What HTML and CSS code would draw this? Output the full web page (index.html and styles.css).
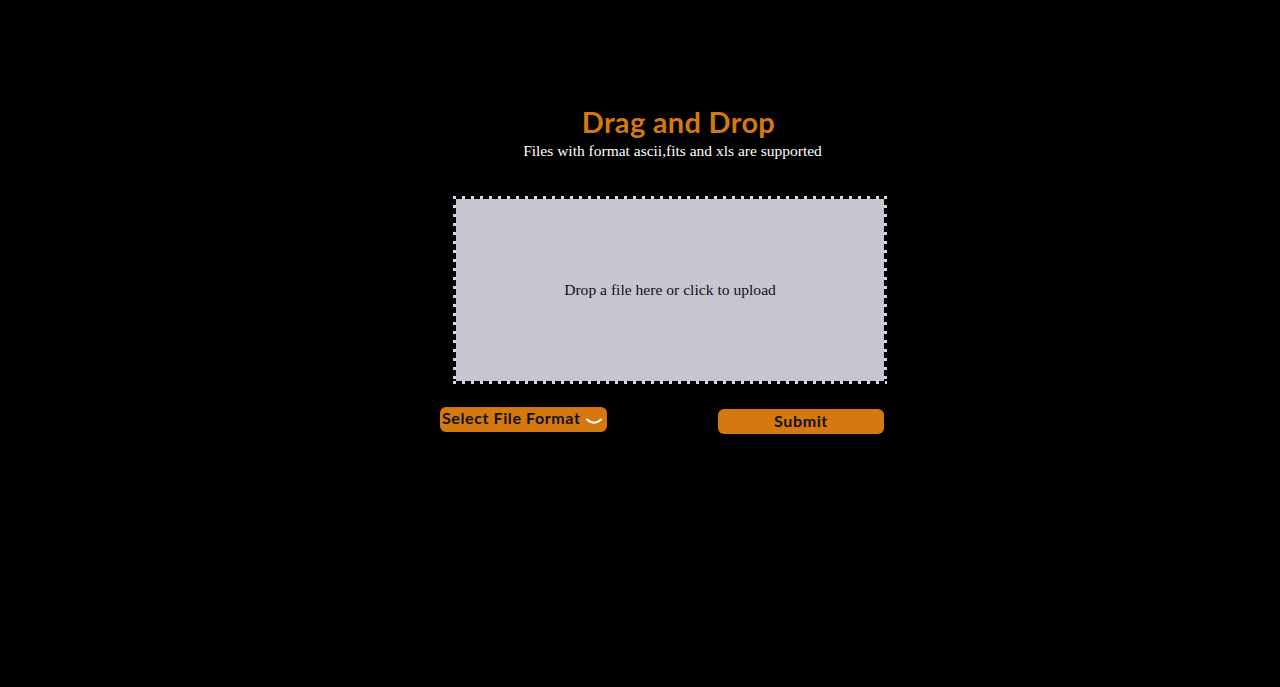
FILE: index.html
```html
<!DOCTYPE html>
<html>
<head>
<meta charset="utf-8">
<link rel="stylesheet" href="styles.css">
</head>
<body>
<main class="page">
  <header class="head">
    <h1 class="title">Drag and Drop</h1>
    <p class="subtitle">Files with format ascii,fits and xls are supported</p>
  </header>
  <div class="dropzone">
    <span class="drop-text">Drop a file here or click to upload</span>
  </div>
  <div class="actions">
    <div class="select">
      <span>Select File Format</span>
      <svg class="chev" width="16" height="8" viewBox="0 0 16 8"><path d="M1 1.5 Q8 8 15 1.5" fill="none" stroke="#fff" stroke-width="2" stroke-linecap="round"/></svg>
    </div>
    <button class="submit">Submit</button>
  </div>
</main>
</body>
</html>
```

FILE: styles.css
```css
html, body {
  margin: 0;
  padding: 0;
  background: #000;
  height: 100%;
}
.page {
  width: 448px;
  margin: 0 auto;
  padding-top: 104px;
  display: flex;
  flex-direction: column;
  position: relative;
  left: 24px;
}
.head {
  text-align: center;
}
.title {
  margin: 0 0 0 29px;
  font-family: "Lato", "Noto Sans", sans-serif;
  font-weight: 700;
  font-size: 29px;
  line-height: 36px;
  color: #d4780f;
  letter-spacing: 0.3px;
}
.subtitle {
  margin: 1px 0 0 17px;
  font-family: "Liberation Serif", serif;
  font-size: 15.5px;
  line-height: 20px;
  color: #fff;
}
.dropzone {
  margin-top: 35px;
  margin-left: 13px;
  width: 434px;
  height: 188px;
  box-sizing: border-box;
  padding: 3px;
  background:
    repeating-linear-gradient(to right, #d6d6dc 0 3px, transparent 3px 9px) left top / 100% 3px no-repeat,
    repeating-linear-gradient(to right, #d6d6dc 0 3px, transparent 3px 9px) left bottom / 100% 3px no-repeat,
    repeating-linear-gradient(to bottom, #d6d6dc 0 3px, transparent 3px 9px) left top / 3px 100% no-repeat,
    repeating-linear-gradient(to bottom, #d6d6dc 0 3px, transparent 3px 9px) right top / 3px 100% no-repeat,
    #c6c6d0;
  background-clip: border-box, border-box, border-box, border-box, content-box;
  display: flex;
  align-items: center;
  justify-content: center;
}
.drop-text {
  font-family: "Liberation Serif", serif;
  font-size: 15.6px;
  color: #111;
}
.actions {
  margin-top: 23px;
  display: flex;
  justify-content: space-between;
  align-items: flex-start;
}
.select {
  height: 25px;
  width: 167px;
  box-sizing: border-box;
  padding: 0 2px 4px;
  background: #d4780f;
  border-radius: 6px;
  display: flex;
  align-items: center;
  gap: 5px;
  font-family: "Lato", "Noto Sans", sans-serif;
  font-weight: 700;
  font-size: 16px;
  letter-spacing: 0.6px;
  color: #111;
}
.chev { margin-top: 8px; }
.submit {
  margin-top: 2px;
  margin-right: 4px;
  width: 166px;
  height: 25px;
  border: none;
  border-radius: 6px;
  background: #d4780f;
  font-family: "Lato", "Noto Sans", sans-serif;
  font-weight: 700;
  font-size: 16px;
  letter-spacing: 0.6px;
  color: #111;
  padding: 0 0 3px;
}
```
